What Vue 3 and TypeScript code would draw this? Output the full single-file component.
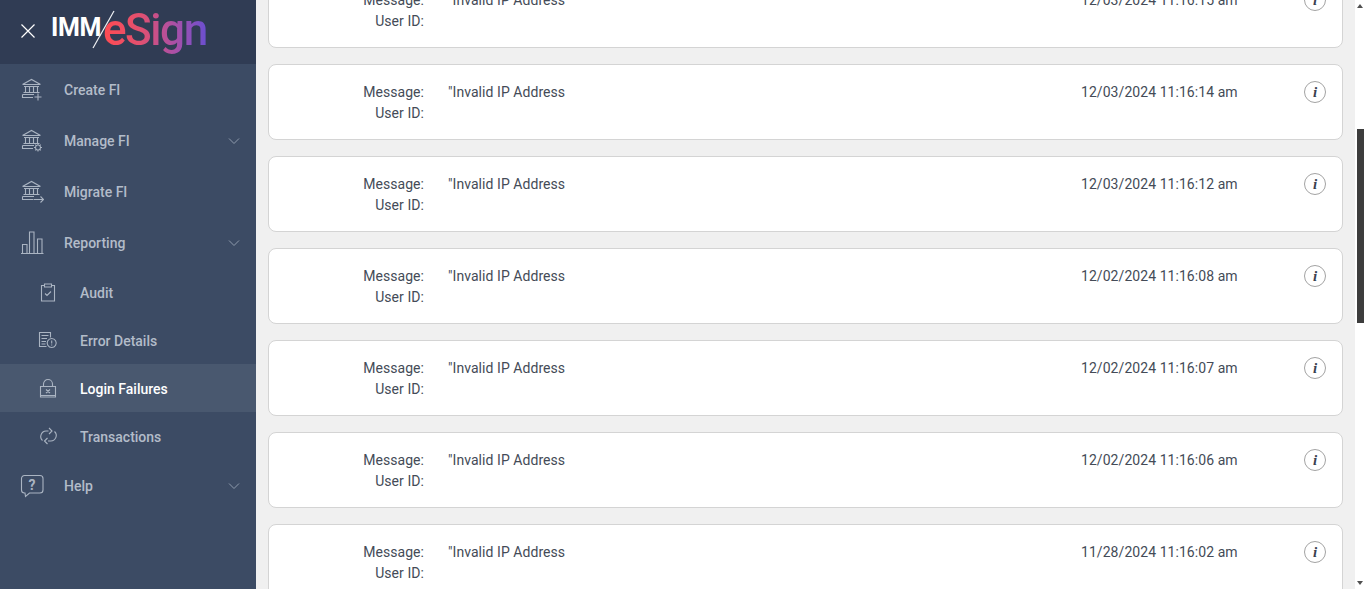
<script setup lang="ts">
interface NavItem {
  label: string
  icon: string
  sub?: boolean
  active?: boolean
  chevron?: boolean
}

const bank = 'M2.5 6.5 11.5 1.5 20.5 6.5M3 6.5H20M4 8.5H19M5.5 8.5V14M9.5 8.5V14M13.5 8.5V14M17.5 8.5V14M3.5 14.5H19.5M2.5 16.5H14M2.5 16.5V19.5H13'

const navItems: NavItem[] = [
  { label: 'Create FI', icon: bank + 'M18 15.5V22.5M14.5 19H21.5' },
  { label: 'Manage FI', chevron: true, icon: bank + 'M18 16A2.5 2.5 0 1 1 17.99 16M18 14.5V16M18 21V22.5M14 18.5H15.5M20.5 18.5H22M15.2 15.7 16.2 16.7M19.8 20.3 20.8 21.3M20.8 15.7 19.8 16.7M16.2 20.3 15.2 21.3' },
  { label: 'Migrate FI', icon: bank + 'M13.5 19.5H23.5M20.5 16.5 23.5 19.5 20.5 22.5' },
  { label: 'Reporting', chevron: true, icon: 'M1 22.5H23.5M2.5 22V13.5H7V22M9.5 22V1H14V22M17.5 22V8H22V22' },
  { label: 'Audit', sub: true, icon: 'M8.5 4.5H5.5V20H18.5V4.5H15.5M8.5 3H15.5V6H8.5ZM9 12.5 11 14.5 15 10.5' },
  { label: 'Error Details', sub: true, icon: 'M14.5 8.5V3.5H3.5V17.5H10.5M5.5 6.5H12.5M5.5 9.5H11M5.5 12.5H10M5.5 15H9.5M15.7 9.5A4.5 4.5 0 1 1 15.69 9.5M15.7 11.5V14.5M15.7 15.5V16.5' },
  { label: 'Login Failures', sub: true, active: true, icon: 'M4.5 9.5H19.5V20H4.5ZM7.5 9.5V7A4.5 4.5 0 0 1 16.5 7V9.5M4.5 18.5H19.5M10 12.5 14 16M14 12.5 10 16' },
  { label: 'Transactions', sub: true, icon: 'M12.5 6H10A5.5 5.5 0 0 0 6.5 15.5M13 3 16 6 13 9M12 16H14.5A5.5 5.5 0 0 0 18.5 6.5M11.5 13 8.5 16 11.5 19' },
  { label: 'Help', chevron: true, icon: 'M4.5 1.5H20A3 3 0 0 1 23 4.5V16A3 3 0 0 1 20 19H9.5L5.5 22.5 5 19H4.5A3 3 0 0 1 1.5 16V4.5A3 3 0 0 1 4.5 1.5Z' },
]

const failures: string[] = [
  '12/03/2024 11:16:15 am',
  '12/03/2024 11:16:14 am',
  '12/03/2024 11:16:12 am',
  '12/02/2024 11:16:08 am',
  '12/02/2024 11:16:07 am',
  '12/02/2024 11:16:06 am',
  '11/28/2024 11:16:02 am',
]
</script>

<template>
  <div class="app">
    <aside class="sidebar">
      <header class="brand">
        <svg class="close" width="16" height="16" viewBox="0 0 16 16">
          <path d="M1.5 1.5 14.5 14.5M14.5 1.5 1.5 14.5" />
        </svg>
        <div class="logo">
          <span class="logo-imm">IMM</span>
          <svg class="logo-slash" width="24" height="40" viewBox="0 0 24 40">
            <path d="M22 1 1 38" />
          </svg>
          <span class="logo-esign">eSign</span>
        </div>
      </header>

      <nav>
        <a
          v-for="item in navItems"
          :key="item.label"
          class="nav-item"
          :class="{ sub: item.sub, active: item.active }"
        >
          <span class="nav-icon">
            <svg width="24" height="24" viewBox="0 0 24 24">
              <path :d="item.icon" />
              <text v-if="item.label === 'Help'" x="12" y="15.5" text-anchor="middle" class="help-mark">?</text>
            </svg>
          </span>
          <span class="nav-label">{{ item.label }}</span>
          <svg v-if="item.chevron" class="chevron" width="12" height="8" viewBox="0 0 12 8">
            <path d="M1 1.5 6 6.5 11 1.5" />
          </svg>
        </a>
      </nav>
    </aside>

    <main class="main">
      <div class="list">
        <section v-for="(date, i) in failures" :key="i" class="card">
          <div class="labels">
            <div>Message:</div>
            <div>User ID:</div>
          </div>
          <div class="message">"Invalid IP Address</div>
          <div class="date">{{ date }}</div>
          <span class="info">i</span>
        </section>
      </div>
    </main>

    <div class="scrollbar">
      <span class="arrow up"></span>
      <span class="thumb"></span>
      <span class="arrow down"></span>
    </div>
  </div>
</template>

<style>
html,
body {
  margin: 0;
  background: #fff;
}
</style>

<style scoped>
.app {
  display: flex;
  height: 589px;
  overflow: hidden;
  font-family: Roboto, 'Liberation Sans', sans-serif;
  font-size: 14px;
  color: #444b57;
}

.sidebar {
  width: 256px;
  flex: none;
  background: #3c4b64;
}

.brand {
  display: flex;
  align-items: center;
  height: 64px;
  padding-left: 20px;
  box-sizing: border-box;
  background: #303c54;
}
.close {
  flex: none;
  margin-top: -2px;
}
.close path {
  fill: none;
  stroke: #fff;
  stroke-width: 1.2;
}

.logo {
  display: flex;
  align-items: flex-start;
  margin-left: 15px;
  margin-top: -5px;
  position: relative;
}
.logo-imm {
  font-size: 25px;
  font-weight: 700;
  line-height: 30px;
  margin-top: 7px;
  color: #fff;
  letter-spacing: -0.4px;
}
.logo-slash {
  position: absolute;
  left: 41px;
  top: 4px;
}
.logo-slash path {
  fill: none;
  stroke: #f0f2f5;
  stroke-width: 1.2;
}
.logo-esign {
  font-size: 44px;
  font-weight: 500;
  line-height: 48px;
  letter-spacing: -1.4px;
  margin-left: 2px;
  background: linear-gradient(90deg, #ff4b52 0%, #e2506f 35%, #a850a8 70%, #6a4fd0 100%);
  -webkit-background-clip: text;
  background-clip: text;
  color: transparent;
}

.nav-item {
  display: flex;
  align-items: center;
  height: 51px;
  box-sizing: border-box;
  padding-left: 20px;
  padding-right: 16px;
  color: #b3bcc9;
  font-weight: 500;
}
.nav-item.sub {
  height: 48px;
  padding-top: 2px;
  padding-left: 36px;
}
.nav-item.active {
  background: #49586f;
  color: #fff;
}
.nav-icon {
  display: flex;
  width: 44px;
  flex: none;
}
.nav-icon path {
  fill: none;
  stroke: #aab4c2;
  stroke-width: 1.1;
}
.help-mark {
  font-size: 14px;
  font-weight: 700;
  fill: #aab4c2;
}
.nav-label {
  flex: 1;
}
.chevron path {
  fill: none;
  stroke: #8f9bad;
  stroke-width: 1;
}

.main {
  flex: 1;
  min-width: 0;
  padding: 0 12px;
  background: #f0f0f0;
  overflow: hidden;
}
.list {
  display: flex;
  flex-direction: column;
  gap: 16px;
  margin-top: -28px;
}

.card {
  display: flex;
  align-items: flex-start;
  flex: none;
  height: 76px;
  box-sizing: border-box;
  padding: 17px 16px 0 0;
  background: #fff;
  border: 1px solid #d4d4d4;
  border-radius: 8px;
  line-height: 21px;
  letter-spacing: 0.06px;
}
.labels {
  width: 155px;
  flex: none;
  text-align: right;
}
.message {
  flex: 1;
  margin-left: 24px;
}
.date {
  width: 156px;
  flex: none;
  white-space: nowrap;
}
.info {
  display: flex;
  align-items: center;
  justify-content: center;
  width: 22px;
  height: 22px;
  box-sizing: border-box;
  flex: none;
  margin-left: 67px;
  margin-top: -1px;
  border: 1px solid #a3a3a3;
  border-radius: 50%;
  font-family: 'Liberation Serif', serif;
  font-size: 15px;
  font-weight: 700;
  font-style: italic;
  color: #3a4150;
}

.scrollbar {
  position: relative;
  width: 11px;
  flex: none;
  background: #fff;
}
.thumb {
  position: absolute;
  top: 129px;
  left: 2px;
  width: 7px;
  height: 194px;
  background: #3d3d3d;
}
.arrow {
  position: absolute;
  left: 2px;
  width: 0;
  height: 0;
  border-left: 3.5px solid transparent;
  border-right: 3.5px solid transparent;
}
.arrow.up {
  top: 4px;
  border-bottom: 4px solid #505050;
}
.arrow.down {
  bottom: 4px;
  border-top: 4px solid #505050;
}
</style>
